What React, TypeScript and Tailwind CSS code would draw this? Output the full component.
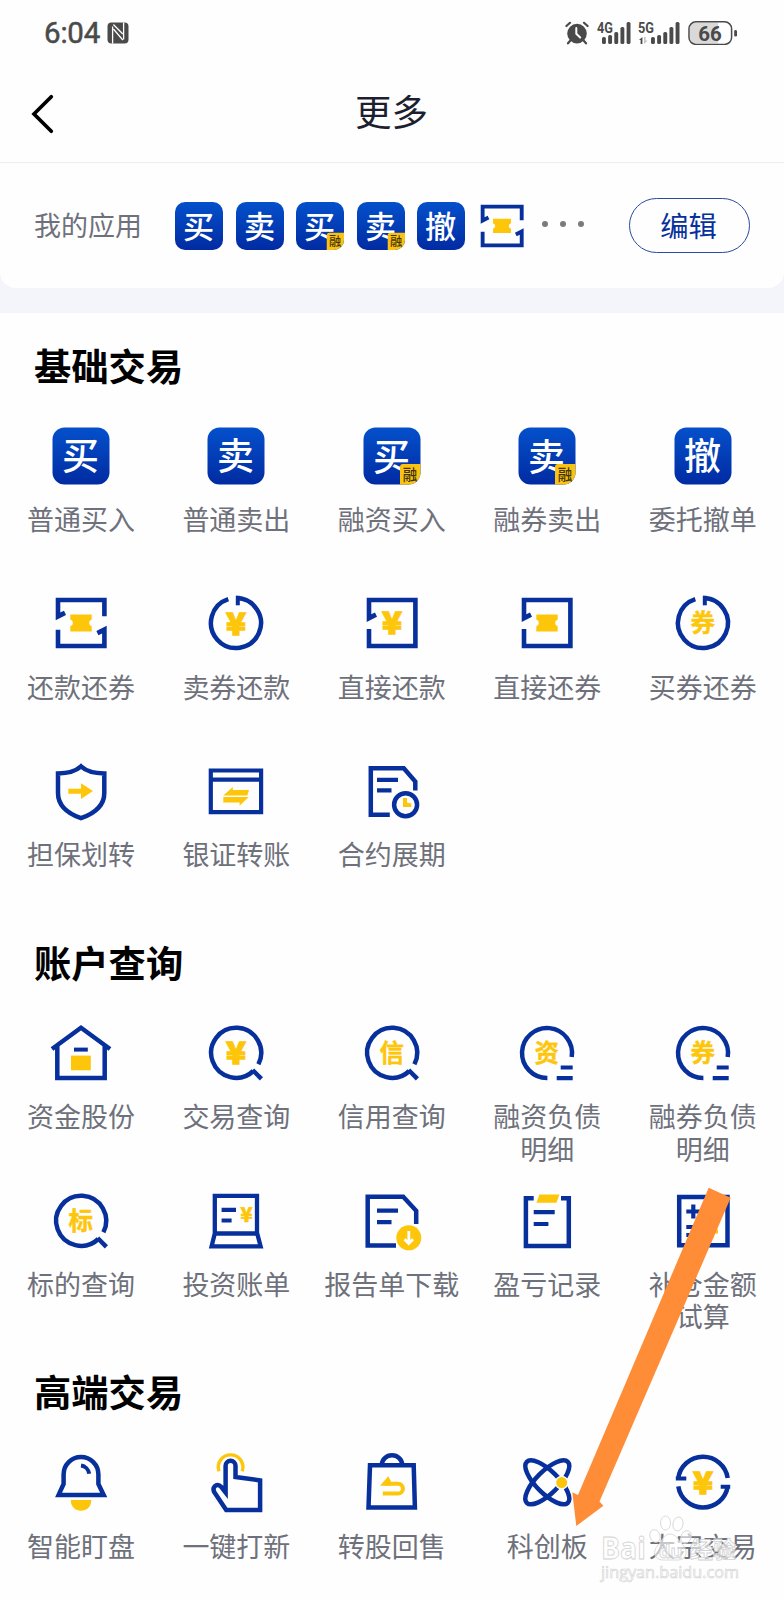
import type { ReactNode } from "react";

const BLUE = "#07309c";
const YELLOW = "#fdc60b";

// ---------- icon helpers ----------

type SvgProps = { children: ReactNode; className?: string; viewBox?: string };

const Svg = ({ children, className = "h-16 w-16", viewBox = "0 0 64 64" }: SvgProps) => (
  <svg viewBox={viewBox} className={className} fill="none" stroke={BLUE} strokeWidth={4.5}>
    {children}
  </svg>
);

const Yen = ({ x = 32, y = 43.8, size = 31, width = 20, weight = 1.3 }) => (
  <text
    x={x - width / 2}
    y={y}
    textLength={width}
    lengthAdjust="spacingAndGlyphs"
    fontSize={size}
    fill={YELLOW}
    stroke={YELLOW}
    strokeWidth={weight}
    className="font-['Noto_Sans_CJK_SC',sans-serif] font-black"
  >
    ¥
  </text>
);

const Char = ({ c }: { c: string }) => (
  <text
    x="31.7"
    y="41.2"
    textAnchor="middle"
    fontSize="24.5"
    fill={YELLOW}
    stroke={YELLOW}
    strokeWidth={0.4}
    className="font-['Noto_Sans_CJK_SC',sans-serif] font-bold"
  >
    {c}
  </text>
);

const Tile = ({ c, tag, small }: { c: string; tag?: boolean; small?: boolean }) => (
  <svg viewBox={small ? "3.5 3.5 57 57" : "0 0 64 64"} className={small ? "h-12 w-12" : "h-16 w-16"}>
    <defs>
      <linearGradient id="tile" x1="0" y1="0" x2="0" y2="1">
        <stop offset="0" stopColor="#0450cb" />
        <stop offset="1" stopColor="#012ba2" />
      </linearGradient>
    </defs>
    <rect x="3.5" y="3.5" width="57" height="57" rx="12" fill="url(#tile)" />
    <text
      x="31.6"
      y={tag ? 46.5 : 45.7}
      textAnchor="middle"
      fontSize="37"
      fill="#fff"
      className="font-['Noto_Sans_CJK_SC',sans-serif] font-medium"
    >
      {c}
    </text>
    {tag && (
      <>
        <path d="M40 60.5V43a3 3 0 0 1 3-3H60.5V48.5a12 12 0 0 1-12 12Z" fill="#fac314" />
        <text
          x="50"
          y="55.8"
          textAnchor="middle"
          fontSize="14.5"
          fill="#40320a"
          className="font-['Noto_Sans_CJK_SC',sans-serif] font-medium"
        >
          融
        </text>
      </>
    )}
  </svg>
);

const Ticket = () => (
  <path
    d="M21.3 23.4H42.7V28.6A3.4 3.4 0 0 0 42.7 35.2V40.4H21.3V35.2A3.4 3.4 0 0 0 21.3 28.6Z"
    fill={YELLOW}
    stroke="none"
  />
);

const RepayBoth = ({ small }: { small?: boolean }) => (
  <Svg viewBox={small ? "3.5 3.5 57 57" : undefined} className={small ? "h-12 w-12" : undefined}>
    <g fill={BLUE} stroke="none">
      <path d="M6.7 29.3V6.7H57.7V25.3H53.1V11.3H11.3V21.6L15 19.8 17 24Z" />
      <path d="M57.7 34.7V57.3H6.7V38.7H11.3V52.7H53.1V42.4L49.4 44.2 47.4 40Z" />
    </g>
    <Ticket />
  </Svg>
);

const NotchSquare = ({ children }: { children: ReactNode }) => (
  <Svg>
    <path
      d="M6.7 31V6.7H57.7V57.3H6.7V38H11.3V52.7H53.1V11.3H11.3V23.3L15 21.6 17 25.8Z"
      fill={BLUE}
      stroke="none"
    />
    {children}
  </Svg>
);

const NotchCircle = ({ children }: { children: ReactNode }) => (
  <Svg>
    <path d="M24.3 8.2A25 25 0 1 0 32 7" />
    <path d="M33.8 4.8V14.3" strokeWidth={4} />
    {children}
  </Svg>
);

const Query = ({ children }: { children: ReactNode }) => (
  <Svg>
    <path d="M54.4 43.2A25 25 0 1 0 49.3 50" />
    <path d="M48.6 49L57.4 57.8" />
    {children}
  </Svg>
);

const Debt = ({ c }: { c: string }) => (
  <Svg>
    <path d="M56.7 36A25 25 0 1 0 32.4 57" />
    <path d="M45.7 46.5H57.7M41.7 57.2H57.7" strokeWidth={4.2} />
    <Char c={c} />
  </Svg>
);

// ---------- data ----------

type Item = { label: string; icon: ReactNode };

const basic: Item[] = [
  { label: "普通买入", icon: <Tile c="买" /> },
  { label: "普通卖出", icon: <Tile c="卖" /> },
  { label: "融资买入", icon: <Tile c="买" tag /> },
  { label: "融券卖出", icon: <Tile c="卖" tag /> },
  { label: "委托撤单", icon: <Tile c="撤" /> },
  { label: "还款还券", icon: <RepayBoth /> },
  { label: "卖券还款", icon: <NotchCircle><Yen /></NotchCircle> },
  { label: "直接还款", icon: <NotchSquare><Yen y={43} /></NotchSquare> },
  { label: "直接还券", icon: <NotchSquare><Ticket /></NotchSquare> },
  { label: "买券还券", icon: <NotchCircle><Char c="券" /></NotchCircle> },
  {
    label: "担保划转",
    icon: (
      <Svg>
        <path d="M32 7.4C27 12 18 14.4 9 14.4V34C9 47 20 55 32 59.2 44 55 55.3 47 55.3 34V14.4C46 14.4 37 12 32 7.4Z" />
        <path d="M19.3 29.7H32V24.3L44 32 32 39.9V34.7H19.3Z" fill={YELLOW} stroke="none" />
      </Svg>
    ),
  },
  {
    label: "银证转账",
    icon: (
      <Svg>
        <path d="M6.8 11.5H57.1V53.1H6.8ZM6.8 20.7H57.1" strokeWidth={4.2} />
        <path
          d="M19.3 36.6L28.8 28V31H45L43.3 36.6ZM44.7 37.9L35.6 46.7V43.5H19.3V37.9Z"
          fill={YELLOW}
          stroke="none"
        />
      </Svg>
    ),
  },
  {
    label: "合约展期",
    icon: (
      <Svg>
        <path d="M29.8 55.8H10.8V9.3H43.8L55.3 22.5V31.5" />
        <path d="M17 20.8H38M17 31.4H31.5" strokeWidth={4.2} />
        <circle cx="45.6" cy="45.8" r="11.5" />
        <path d="M43 39H47V43.5L51.3 44.5V48H43Z" fill={YELLOW} stroke="none" />
      </Svg>
    ),
  },
];

const account: Item[] = [
  {
    label: "资金股份",
    icon: (
      <Svg>
        <path d="M3 28L32 6.8 61 28M8.3 25V57H55.7V25" />
        <path d="M25 28.6H38.8" strokeWidth={4} />
        <path d="M22 34.6H41.8V49.3H22Z" fill={YELLOW} stroke="none" />
      </Svg>
    ),
  },
  { label: "交易查询", icon: <Query><Yen y={43} /></Query> },
  { label: "信用查询", icon: <Query><Char c="信" /></Query> },
  { label: "融资负债明细", icon: <Debt c="资" /> },
  { label: "融券负债明细", icon: <Debt c="券" /> },
  { label: "标的查询", icon: <Query><Char c="标" /></Query> },
  {
    label: "投资账单",
    icon: (
      <Svg>
        <path d="M10.8 44.5V6.8H53V44.5M10.8 44.5H53.2L56.6 57.3H7.6L10.8 44.5Z" strokeWidth={4.3} />
        <path d="M17.6 20.8H32M17.6 31.5H27.6" strokeWidth={4.2} />
        <Yen x={42.5} y={33} size={20} width={12} weight={0.6} />
      </Svg>
    ),
  },
  {
    label: "报告单下载",
    icon: (
      <Svg>
        <path d="M36 56.6H7.7V7.8H43.2L56.2 21.8V35" />
        <path d="M17 21.7H38M17 33.2H31.5" strokeWidth={4.3} />
        <circle cx="48.8" cy="48.8" r="12.5" fill={YELLOW} stroke="none" />
        <path d="M48.8 42V54M44.6 50.2L48.8 54.4 53 50.2" stroke="#fff" strokeWidth={2.8} />
      </Svg>
    ),
  },
  {
    label: "盈亏记录",
    icon: (
      <Svg>
        <path d="M18.7 9.3H10.9V57H53.8V9.3H46" />
        <path d="M18.7 23.2H39.7M18.7 35H33.4" strokeWidth={4.2} />
        <path d="M24.4 5.5H44.4L41.5 13.8H21.4Z" fill={YELLOW} stroke="none" />
      </Svg>
    ),
  },
  {
    label: "补仓金额试算",
    icon: (
      <Svg>
        <path d="M8.2 8H56.5V56.3H8.2Z" />
        <path d="M15.3 22.5H29.3M22.3 15.5V29.5M15.3 38H29M15.3 46H29" strokeWidth={4.2} />
        <path d="M35 42.5H47M41 36.5V48.5" stroke={YELLOW} strokeWidth={4} />
      </Svg>
    ),
  },
];

const advanced: Item[] = [
  {
    label: "智能盯盘",
    icon: (
      <Svg>
        <path d="M9.6 44.9L14.6 34V24.4A17.4 17.4 0 0 1 49.4 24.4V34L54.7 44.9Z" />
        <path d="M32 15.6A9.5 9.5 0 0 1 40.2 23.8" strokeWidth={4} />
        <path d="M21.8 50H42.3C42.3 57 37.5 60.8 32 60.8S21.8 57 21.8 50Z" fill={YELLOW} stroke="none" />
      </Svg>
    ),
  },
  {
    label: "一键打新",
    icon: (
      <Svg>
        <path d="M15 21.3A12.3 12.3 0 1 1 38.2 21.3" stroke={YELLOW} strokeWidth={3.4} />
        <path d="M31.5 15.8V27L56.1 30.4V60.1H22.2L10.7 42.8C7.4 37.5 12.5 32.2 17.2 36.8L21.6 42.5V15.8A4.95 4.95 0 0 1 31.5 15.8Z" />
      </Svg>
    ),
  },
  {
    label: "转股回售",
    icon: (
      <Svg>
        <path d="M10 15.3H53.7L54.9 57.5H8.5ZM21.8 15A10.2 9.7 0 0 1 42.2 15" />
        <path d="M25 33.7H38A4.9 4.9 0 0 1 38 43.6H22.8" stroke={YELLOW} strokeWidth={4} />
        <path d="M20 35.7L28.3 26.3 30.8 31V35.7Z" fill={YELLOW} stroke="none" />
      </Svg>
    ),
  },
  {
    label: "科创板",
    icon: (
      <Svg>
        <ellipse cx="32.3" cy="32.3" rx="29" ry="11.1" transform="rotate(45 32.3 32.3)" />
        <ellipse cx="32.3" cy="32.3" rx="29" ry="11.1" transform="rotate(-45 32.3 32.3)" />
        <circle cx="46.7" cy="32.6" r="6.2" fill={YELLOW} stroke="#fefefe" strokeWidth={1.4} />
      </Svg>
    ),
  },
  {
    label: "大宗交易",
    icon: (
      <Svg>
        <path d="M7.2 28.5A25 25 0 0 1 56.7 28M7.3 36.4A25 25 0 0 0 56.7 36.4" />
        <path d="M4.8 28.5H15.3M49.7 36.7H59.2" strokeWidth={4} />
        <Yen y={43.6} />
      </Svg>
    ),
  },
];

// ---------- layout ----------

const Signal = ({ label, data }: { label: string; data?: boolean }) => (
  <svg viewBox="0 0 41 24" className="h-6 w-[41px] overflow-visible" fill="#4a4a4a">
    <text x="0" y="12" fontSize="15" textLength="16" lengthAdjust="spacingAndGlyphs" className="font-[Roboto] font-bold">
      {label}
    </text>
    {[16, 14, 11, 6, 1].map((y, i) => (
      <rect key={y} x={(data ? 13 : 5) + i * 6.15} y={y} width="3.9" height={23 - y} rx="1.6" />
    ))}
    {data && (
      <>
        <path d="M1 19L4.4 16V23H2.6V19Z" />
        <path d="M6 16V23L9.5 19.5H7.6V16Z" fill="#c4c4c4" />
      </>
    )}
  </svg>
);

const StatusBar = () => (
  <div className="flex h-[66px] items-center pl-[44px] pr-[46px]">
    <span className="w-[63px] pt-px font-[Roboto] text-[29.5px] leading-none tracking-[-0.2px] text-[#4a4a4a] [-webkit-text-stroke:0.5px_#4a4a4a]">
      6:04
    </span>
    <svg viewBox="0 0 22 22" className="h-[22px] w-[22px]">
      <rect x="0.5" y="0.5" width="21" height="21" rx="4" fill="#4a4a4a" />
      <path d="M5.6 21.5V4.5M16.6 0.5V17.5" stroke="#fefefe" strokeWidth="1.3" />
      <path d="M6.4 2.5L15.8 12M6.4 7L15.8 18" stroke="#fefefe" strokeWidth="1.3" />
    </svg>
    <div className="ml-auto flex items-center">
      <svg viewBox="0 0 24 24" className="mr-2 h-6 w-6" fill="none" stroke="#4a4a4a" strokeWidth="2.2" strokeLinecap="round">
        <circle cx="12" cy="12.6" r="9.8" fill="#4a4a4a" stroke="none" />
        <path d="M1.4 5L5 1.8M22.6 5L19 1.8M5.4 19.5L3 22.3M18.6 19.5L21 22.3" />
        <path d="M11.3 7V12.8L15.2 16.5" stroke="#fefefe" strokeWidth="2" />
      </svg>
      <Signal label="4G" />
      <Signal label="5G" data />
      <svg viewBox="0 0 50 24" className="ml-[9px] h-6 w-[50px]">
        <path d="M8 1.5H30V22.5H8A6 6 0 0 1 2 16.5V7.5A6 6 0 0 1 8 1.5Z" fill="#d9d9d9" />
        <rect x="1" y="0.8" width="42.6" height="22.6" rx="7" fill="none" stroke="#4a4a4a" strokeWidth="1.5" />
        <rect x="46.2" y="9" width="2.8" height="6.6" rx="1.4" fill="#4a4a4a" />
        <text x="22" y="19.6" textAnchor="middle" fontSize="20.5" fill="#4a4a4a" className="font-[Roboto] font-bold">
          66
        </text>
      </svg>
    </div>
  </div>
);

const Section = ({ title, items }: { title: string; items: Item[] }) => (
  <section>
    <h2 className="mb-[22px] pl-[34px] text-[37.3px] font-bold leading-[70px] pb-[2px] text-black">{title}</h2>
    <div className="grid auto-rows-[167.75px] grid-cols-5 pl-[3.2px] pr-[3.5px]">
      {items.map(({ label, icon }) => (
        <div key={label} className="flex flex-col items-center">
          {icon}
          <span
            className={`mt-[15.4px] text-center text-[27px] leading-[32.4px] text-[#6e717b] ${
              label.length > 5 ? "w-[110px]" : "whitespace-nowrap"
            }`}
          >
            {label}
          </span>
        </div>
      ))}
    </div>
  </section>
);

const Pointer = () => (
  <svg viewBox="0 0 160 340" className="absolute left-[571px] top-[1187px] h-[340px] w-[160px]">
    <path d="M137.7 0.7L159.7 10.7 28.5 314.5 32.4 318.7 5.3 339 1.3 305.3 7 308Z" fill="#ff8c37" />
  </svg>
);

const Watermark = () => (
  <svg
    viewBox="0 0 150 72"
    className="absolute left-[598px] top-[1512px] h-[72px] w-[150px]"
    fill="#fff"
    fillOpacity={0.6}
    stroke="#d2d2d2"
    strokeWidth={0.8}
  >
    <text x="3" y="47" fontSize="30" textLength="45" lengthAdjust="spacingAndGlyphs" className="font-['Open_Sans'] font-bold">
      Bai
    </text>
    <ellipse cx="57" cy="24" rx="5" ry="6.5" transform="rotate(-20 57 24)" />
    <ellipse cx="67.5" cy="11" rx="5" ry="7" />
    <ellipse cx="80" cy="12" rx="5" ry="7" transform="rotate(12 80 12)" />
    <ellipse cx="88" cy="25" rx="5" ry="6.5" transform="rotate(25 88 25)" />
    <path d="M72 22C78 22 81 29 85 33 91 40 88 48 80 48 75 48 70 48 65 48 56 48 54 40 60 33 64 29 66 22 72 22Z" />
    <text x="61" y="46" fontSize="18" className="font-['Open_Sans'] font-bold">
      du
    </text>
    <text x="92" y="46" fontSize="23" className="font-['Noto_Sans_CJK_SC'] font-bold">
      经验
    </text>
    <text x="3" y="66" fontSize="16" textLength="138" lengthAdjust="spacingAndGlyphs" strokeWidth={0.6} className="font-['Open_Sans']">
      jingyan.baidu.com
    </text>
  </svg>
);

export default function App() {
  return (
    <div className="relative h-[1600px] w-[784px] overflow-hidden bg-[#fefefe] font-['Noto_Sans_CJK_SC',sans-serif]">
      <StatusBar />

      <header className="grid h-[97px] grid-cols-[1fr_auto_1fr] items-center border-b border-[#ededed] px-[30px]">
        <svg viewBox="0 0 24 42" className="h-[42px] w-6" fill="none" stroke="#000" strokeWidth="3.7" strokeLinecap="round">
          <path d="M21.3 3.8L4 21 21.3 38.3" />
        </svg>
        <h1 className="pb-[6px] pr-px text-[36.5px] leading-none text-[#1d1f30]">更多</h1>
      </header>

      <div className="bg-[#f4f5fa] pb-[25px]">
        <div className="flex h-[125px] items-center rounded-b-[16px] bg-[#fefefe] pl-[34px] pr-[34px]">
          <span className="w-[141px] pb-[2px] text-[27px] leading-none text-[#6e717b]">我的应用</span>
          <div className="flex gap-[12.6px]">
            <Tile c="买" small />
            <Tile c="卖" small />
            <Tile c="买" tag small />
            <Tile c="卖" tag small />
            <Tile c="撤" small />
            <RepayBoth small />
          </div>
          <div className="mb-1 ml-[16px] flex gap-3">
            <i className="h-[6px] w-[6px] rounded-full bg-[#7b7b7b]" />
            <i className="h-[6px] w-[6px] rounded-full bg-[#7b7b7b]" />
            <i className="h-[6px] w-[6px] rounded-full bg-[#7b7b7b]" />
          </div>
          <button className="ml-auto h-[55px] w-[121px] rounded-full border border-[#284a9f] pb-px pr-[2px] text-[28.3px] leading-none text-[#07309c]">
            编辑
          </button>
        </div>
      </div>

      <main className="pt-[16.5px]">
        <Section title="基础交易" items={basic} />
        <Section title="账户查询" items={account} />
        <Section title="高端交易" items={advanced} />
      </main>

      <Pointer />
      <Watermark />
    </div>
  );
}
